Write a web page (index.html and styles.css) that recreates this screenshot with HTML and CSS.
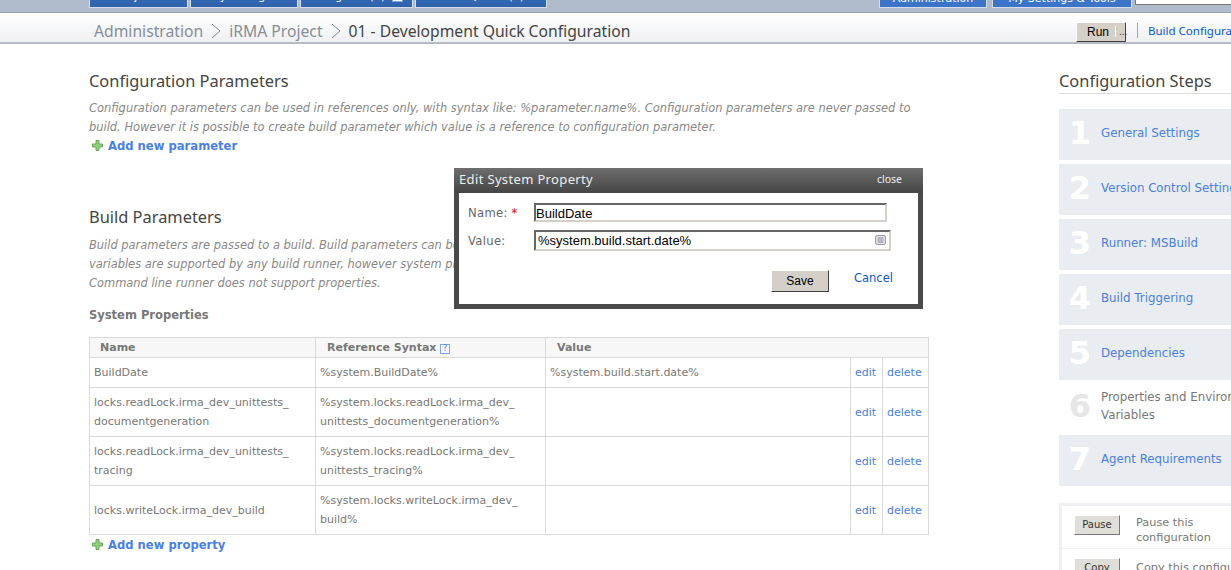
FILE: index.html
```html
<!DOCTYPE html>
<html lang="en">

<head>
    <meta charset="UTF-8">
    <title>01 - Development Quick Configuration</title>
    <link rel="stylesheet" href="styles.css">
</head>

<body>
    <!-- Top tabs, cut off by the top of the window -->
    <div class="top-nav">
        <a class="tab tab-projects">Projects</a>
        <a class="tab tab-changes">My Changes</a>
        <a class="tab tab-agents">Agents (3)<span class="tab-icon"></span></a>
        <a class="tab tab-queue">Build Queue (0)</a>
        <span class="nav-spacer"></span>
        <a class="tab tab-admin">Administration</a>
        <a class="tab tab-settings">My Settings &amp; Tools</a>
        <span class="search-box"></span>
    </div>

    <!-- Breadcrumb -->
    <div class="crumb-bar">
        <div class="crumbs">
            <a>Administration</a>
            <svg class="crumb-sep" width="10" height="16" viewBox="0 0 10 16"><path d="M1 1l8 7-8 7" fill="none" stroke="#7d8694" stroke-width="1"/></svg>
            <a>iRMA Project</a>
            <svg class="crumb-sep" width="10" height="16" viewBox="0 0 10 16"><path d="M1 1l8 7-8 7" fill="none" stroke="#7d8694" stroke-width="1"/></svg>
            <span class="crumb-current">01 - Development Quick Configuration</span>
        </div>
        <div class="crumb-actions">
            <span class="run-btn">Run<span class="run-more">...</span></span>
            <a class="crumb-link">Build Configuration Settings</a>
        </div>
    </div>

    <div class="page">
        <div class="main">
            <h2 class="title-first">Configuration Parameters</h2>
            <p class="note">Configuration parameters can be used in references only, with syntax like: %parameter.name%. Configuration parameters are never passed to<br>build. However it is possible to create build parameter which value is a reference to configuration parameter.</p>
            <a class="add-link">
                <svg width="11" height="11" viewBox="0 0 11 11"><path d="M4 .5h3v3.5h3.500v3H7v3.500H4V7H.5V4H4z" fill="#8fd07c" stroke="#6aa85a"/></svg>
                Add new parameter
            </a>

            <h2 class="title-build">Build Parameters</h2>
            <p class="note note-build">Build parameters are passed to a build. Build parameters can be of two types: environment variables and system properties. Environment<br>variables are supported by any build runner, however system properties are supported by some of the runners only.<br>Command line runner does not support properties.</p>

            <h3>System Properties</h3>
            <table class="props">
                <colgroup>
                    <col class="col-name">
                    <col class="col-ref">
                    <col>
                    <col class="col-edit">
                    <col class="col-delete">
                </colgroup>
                <thead>
                    <tr>
                        <th>Name</th>
                        <th>Reference Syntax <span class="help">?</span></th>
                        <th colspan="3">Value</th>
                    </tr>
                </thead>
                <tbody>
                    <tr class="row-short">
                        <td>BuildDate</td>
                        <td>%system.BuildDate%</td>
                        <td>%system.build.start.date%</td>
                        <td><a>edit</a></td>
                        <td><a>delete</a></td>
                    </tr>
                    <tr>
                        <td>locks.readLock.irma_dev_unittests_<br>documentgeneration</td>
                        <td>%system.locks.readLock.irma_dev_<br>unittests_documentgeneration%</td>
                        <td></td>
                        <td><a>edit</a></td>
                        <td><a>delete</a></td>
                    </tr>
                    <tr>
                        <td>locks.readLock.irma_dev_unittests_<br>tracing</td>
                        <td>%system.locks.readLock.irma_dev_<br>unittests_tracing%</td>
                        <td></td>
                        <td><a>edit</a></td>
                        <td><a>delete</a></td>
                    </tr>
                    <tr>
                        <td>locks.writeLock.irma_dev_build</td>
                        <td>%system.locks.writeLock.irma_dev_<br>build%</td>
                        <td></td>
                        <td><a>edit</a></td>
                        <td><a>delete</a></td>
                    </tr>
                </tbody>
            </table>
            <a class="add-link add-property">
                <svg width="11" height="11" viewBox="0 0 11 11"><path d="M4 .5h3v3.500h3.500v3H7v3.500H4V7H.5V4H4z" fill="#8fd07c" stroke="#6aa85a"/></svg>
                Add new property
            </a>
        </div>

        <div class="side">
            <h2 class="side-title">Configuration Steps</h2>
            <ul class="steps">
                <li><span class="num">1</span><a>General Settings</a></li>
                <li><span class="num">2</span><a>Version Control Settings</a></li>
                <li><span class="num">3</span><a>Runner: MSBuild</a></li>
                <li><span class="num">4</span><a>Build Triggering</a></li>
                <li><span class="num">5</span><a>Dependencies</a></li>
                <li class="current"><span class="num">6</span><span class="step-text">Properties and Environment<br>Variables</span></li>
                <li><span class="num">7</span><a>Agent Requirements</a></li>
            </ul>
            <div class="actions">
                <div class="action">
                    <span class="small-btn">Pause</span>
                    <span class="action-text">Pause this<br>configuration</span>
                </div>
                <div class="action">
                    <span class="small-btn">Copy</span>
                    <span class="action-text action-single">Copy this configuration</span>
                </div>
            </div>
        </div>
    </div>

    <!-- Edit dialog -->
    <div class="dialog">
        <div class="dialog-head">
            <span>Edit System Property</span>
            <a class="dialog-close">close</a>
        </div>
        <div class="dialog-body">
            <div class="field">
                <label>Name: <span class="req">*</span></label>
                <input class="input-name" type="text" value="BuildDate">
            </div>
            <div class="field field-value">
                <label>Value:</label>
                <div class="value-wrap">
                    <input class="input-value" type="text" value="%system.build.start.date%">
                    <svg class="value-icon" width="11" height="10" viewBox="0 0 11 10"><rect x=".5" y=".5" width="10" height="9" rx="1.500" fill="#e2e4e8" stroke="#9a9fa6"/><path d="M2.500 3h6M2.500 5h6M2.500 7h6" stroke="#8a8f96"/></svg>
                </div>
            </div>
            <div class="dialog-foot">
                <span class="save-btn">Save</span>
                <a class="cancel">Cancel</a>
            </div>
        </div>
    </div>
</body>

</html>
```

FILE: styles.css
```css
* {
    margin: 0;
    padding: 0;
    box-sizing: border-box;
}

html,
body {
    height: 570px;
    overflow: hidden;
}

body {
    background-color: #fff;
    font-family: "DejaVu Sans", sans-serif;
    font-size: 11px;
    color: #666;
    position: relative;
}

a {
    color: #4a80e0;
}

/* Top tabs */
.top-nav {
    height: 13px;
    background-color: #b0bccb;
    border-bottom: 1px solid #9ca3ad;
    display: flex;
    align-items: flex-end;
    padding: 0 0 4px 89px;
    overflow: hidden;
}

.tab {
    flex: none;
    height: 30px;
    background: linear-gradient(#3f78c8, #2f62ab);
    border: 1px solid #d5dde8;
    border-top: none;
    color: #fff;
    text-align: center;
    line-height: 37px;
    margin-right: 2px;
    position: relative;
}

.tab-projects { width: 99px; }
.tab-changes { width: 108px; }
.tab-agents { width: 113px; }
.tab-queue { width: 132px; margin-right: 0; }
.nav-spacer { width: 332px; flex: none; }
.tab-admin { width: 108px; margin-right: 5px; background: #3c74c8; line-height: 42px; }
.tab-settings { width: 140px; margin-right: 3px; background: #3c74c8; line-height: 42px; }

.tab-icon {
    position: absolute;
    left: 91px;
    bottom: 5px;
    width: 11px;
    height: 10px;
    background-color: #fff;
    border: 1px solid #7ea6e6;
}

.search-box {
    flex: none;
    width: 100px;
    height: 20px;
    margin-bottom: 3px;
    background-color: #fff;
    border: 1px solid #777;
}

/* Breadcrumb */
.crumb-bar {
    height: 31px;
    background: linear-gradient(#ffffff, #eff0f2);
    border-bottom: 2px solid #b5bac4;
    display: flex;
    justify-content: space-between;
    padding: 6px 0 0 94px;
}

.crumbs {
    display: flex;
    align-items: center;
    gap: 8px;
    font-family: "Noto Sans", sans-serif;
    font-size: 15.700px;
    color: #878e99;
    white-space: nowrap;
}

.crumbs a {
    color: #878e99;
}

.crumb-current {
    color: #444;
}

.crumb-actions {
    display: flex;
    align-items: center;
    flex: none;
    width: 155px;
    white-space: nowrap;
}

.run-btn {
    flex: none;
    display: flex;
    align-items: center;
    height: 20px;
    width: 50px;
    margin-top: 2px;
    padding-left: 10px;
    background-color: #d4d0c8;
    border: 1px solid;
    border-color: #fff #404040 #404040 #fff;
    font-family: "Liberation Sans", sans-serif;
    font-size: 12px;
    color: #000;
}

.run-more {
    margin-left: 6px;
    padding-left: 3px;
    border-left: 1px solid #fff;
    font-size: 10px;
    color: #333;
}

.crumb-link {
    margin-left: 11px;
    padding-left: 10px;
    border-left: 1px solid #9aa7b8;
    line-height: 15px;
    color: #0b57d0;
    font-family: "Noto Sans", sans-serif;
    font-size: 11.500px;
}

/* Page columns */
.page {
    display: flex;
    padding-left: 89px;
}

.main {
    flex: none;
    width: 840px;
    margin-right: 130px;
}

h2 {
    font-family: "Noto Sans", sans-serif;
    font-size: 16.400px;
    font-weight: 400;
    color: #444;
    line-height: 24px;
}

.title-first {
    margin-top: 25px;
}

.title-build {
    margin-top: 50px;
}

.note {
    margin-top: 6px;
    font-style: italic;
    font-size: 11.450px;
    line-height: 19px;
    color: #888;
    white-space: nowrap;
}

.note-build {
    margin-top: 7px;
}

.add-link {
    display: flex;
    align-items: center;
    gap: 5px;
    padding-left: 3px;
    margin-top: -1px;
    height: 19px;
    font-size: 11.600px;
    font-weight: 700;
    color: #4a80e0;
}

h3 {
    margin-top: 13px;
    font-size: 11.500px;
    line-height: 19px;
    font-weight: 700;
    color: #777;
}

/* Properties table */
.props {
    width: 840px;
    margin-top: 12px;
    border-collapse: collapse;
    table-layout: fixed;
    font-size: 11px;
}

.col-name { width: 226px; }
.col-ref { width: 230px; }
.col-edit { width: 32px; }
.col-delete { width: 46px; }

.props th,
.props td {
    border: 1px solid #d9d9d9;
    text-align: left;
    vertical-align: middle;
    white-space: nowrap;
    overflow: hidden;
}

.props th {
    height: 20px;
    padding-left: 11px;
    background-color: #f7f7f7;
    font-weight: 700;
    color: #777;
}

.props th:first-child {
    padding-left: 10px;
}

.props td {
    height: 49px;
    padding: 0 4px;
    line-height: 19px;
    color: #777;
}

.props .row-short td {
    height: 30px;
}

.help {
    display: inline-block;
    width: 10px;
    height: 10px;
    border: 1px solid #7ea6e6;
    font-size: 8px;
    line-height: 8px;
    font-weight: 400;
    text-align: center;
    color: #4a80e0;
}

.add-property {
    margin-top: 0;
}

/* Right column */
.side {
    flex: none;
    width: 300px;
}

.side-title {
    margin-top: 25px;
    height: 25px;
    border-bottom: 1px solid #dcdcdc;
}

.steps {
    list-style: none;
    margin-top: 15px;
}

.steps li {
    height: 51px;
    margin-bottom: 4px;
    padding-bottom: 3px;
    background-color: #e9ecf1;
    display: flex;
    align-items: center;
    font-size: 11.800px;
    line-height: 18px;
    white-space: nowrap;
}

.steps li.current {
    height: 47px;
    background-color: #fff;
    color: #777;
}

.num {
    width: 42px;
    text-align: center;
    font-family: "DejaVu Sans", sans-serif;
    font-size: 32px;
    font-weight: 700;
    color: #fff;
}

.current .num {
    color: #e6e6e6;
}

/* Actions box */
.actions {
    margin-top: 17px;
    border: 3px solid #eef0f5;
    border-right: none;
}

.action {
    display: flex;
    align-items: flex-start;
    height: 43px;
    border-bottom: 1px solid #eef0f5;
    padding: 9px 0 0 12px;
    white-space: nowrap;
    font-size: 11.300px;
    line-height: 15px;
    color: #777;
}

.action-single {
    padding-top: 2px;
}

.small-btn {
    flex: none;
    width: 46px;
    height: 20px;
    margin-right: 16px;
    background-color: #e0ded8;
    border: 1px solid;
    border-color: #fff #777 #777 #fff;
    font-size: 10px;
    line-height: 18px;
    text-align: center;
    color: #333;
}

/* Dialog */
.dialog {
    position: absolute;
    left: 454px;
    top: 168px;
    width: 469px;
    height: 141px;
    background-color: #4a4a4a;
    padding: 0 5px 5px;
}

.dialog-head {
    height: 25px;
    background: linear-gradient(#6e6e6e, #454545);
    margin: 0 -5px;
    padding: 0 21px 4px 5px;
    display: flex;
    justify-content: space-between;
    align-items: center;
    font-family: "Noto Sans", sans-serif;
    font-size: 13px;
    letter-spacing: .35px;
    color: #eee;
}

.dialog-close {
    font-size: 10.500px;
    letter-spacing: 0;
    color: #eee;
}

.dialog-body {
    height: 111px;
    background-color: #fff;
    padding: 10px 27px 0 9px;
}

.field {
    display: flex;
    height: 19px;
}

.field-value {
    height: 21px;
    margin-top: 8px;
}

.field label {
    flex: none;
    width: 66px;
    padding-top: 1px;
    font-size: 11.600px;
    line-height: 19px;
    letter-spacing: .3px;
    color: #666;
}

.field-value label {
    padding-top: 2px;
}

.req {
    color: #e00;
}

input {
    display: block;
    border: 2px solid;
    border-color: #666 #d4d0c8 #d4d0c8 #666;
    outline: none;
    font-family: "Liberation Sans", sans-serif;
    font-size: 13px;
    color: #000;
}

.input-name {
    width: 353px;
    height: 19px;
    padding: 1px 0 0;
}

.value-wrap {
    position: relative;
}

.input-value {
    width: 357px;
    height: 21px;
    padding: 0 2px;
}

.value-icon {
    position: absolute;
    right: 5px;
    top: 5px;
}

.dialog-foot {
    display: flex;
    margin-top: 19px;
    padding-left: 303px;
}

.save-btn {
    flex: none;
    width: 58px;
    height: 22px;
    background-color: #d4d0c8;
    border: 1px solid;
    border-color: #fff #404040 #404040 #fff;
    font-family: "Liberation Sans", sans-serif;
    font-size: 12px;
    line-height: 21px;
    text-align: center;
    color: #000;
}

.cancel {
    margin-left: 25px;
    padding-top: 1px;
    font-size: 11.500px;
    line-height: 15px;
    color: #0b57d0;
}
```
